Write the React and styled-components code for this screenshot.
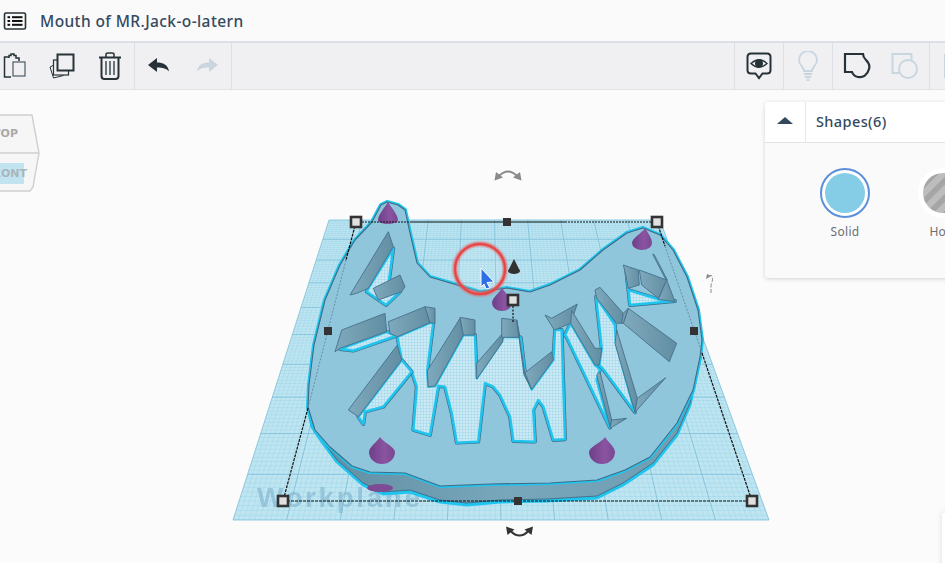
import React from "react";
import styled, { createGlobalStyle } from "styled-components";

const GlobalStyle = createGlobalStyle`
  html, body { margin: 0; padding: 0; background: #fbfbfb; }
  body { font-family: "Noto Sans", "Open Sans", sans-serif; }
`;

const DARK = "#263238";
const FADED = "#c9d6e0";

// zoomed crops were read at 3x, these turn crop coords into page coords
const crop = (ox, oy) => (pts) => pts.map(([x, y]) => [x / 3 + ox, y / 3 + oy]);
const a = crop(320, 280);
const b = crop(500, 280);
const c = crop(300, 160);
const d = crop(530, 200);
const str = (pts) => pts.map((p) => p.map((n) => n.toFixed(1)).join(",")).join(" ");

const TOP_TL = [329, 220];
const TOP_TR = [660, 220];
const BOT_L = [233, 520];
const BOT_R = [769, 520];

function gridLines(n) {
  const lines = [];
  for (let i = 0; i <= n; i++) {
    const u = i / n;
    lines.push([
      TOP_TL[0] + (TOP_TR[0] - TOP_TL[0]) * u,
      220,
      BOT_L[0] + (BOT_R[0] - BOT_L[0]) * u,
      520,
    ]);
    const w = 1 / (1 / 536 + u * (1 / 331 - 1 / 536));
    const y = 220 + (300 * (w - 331)) / (536 - 331);
    const t = (y - 220) / 300;
    lines.push([329 - 96 * t, y, 660 + 109 * t, y]);
  }
  return lines;
}
const fineGrid = gridLines(100);
const majorGrid = gridLines(10);

const topSurface = [
  [387, 202], [398, 205], [405, 210], [410, 233], [417, 263], [430, 277], [457, 285], [480, 292],
  [507, 288], [530, 292], [550, 285], [580, 270], [603, 250], [627, 233], [643, 228], [660, 235],
  [673, 250], [687, 277], [698, 310], [702, 340], [700, 357], [693, 390], [677, 423], [650, 457],
  [625, 470], [597, 480], [550, 483], [490, 484], [440, 486], [405, 473], [370, 472], [352, 466],
  [330, 447], [315, 430], [308, 407], [309, 385], [314, 345], [325, 300], [340, 265], [355, 240],
  [372, 222], [381, 205],
];

const sideWall = [
  [308, 407], [312, 425], [320, 437], [337, 460], [363, 483], [383, 492], [410, 490], [440, 500],
  [467, 503], [500, 500], [547, 499], [597, 496], [623, 483], [653, 463], [677, 433], [690, 403],
  [700, 357], [693, 390], [677, 423], [650, 457], [625, 470], [597, 480], [550, 483], [490, 484],
  [440, 486], [405, 473], [370, 472], [352, 466], [330, 447], [315, 430],
];

const floors = [
  [
    ...a([[232, 170], [330, 128], [340, 128], [322, 272], [325, 320], [345, 318], [430, 165], [465, 165], [470, 295], [545, 185], [550, 170]]),
    ...b([[62, 172], [75, 280], [95, 328], [160, 240], [165, 150], [185, 150], [195, 478], [160, 480], [130, 380], [115, 360], [100, 390], [105, 485], [40, 483], [30, 410], [0, 345]]),
    ...a([[520, 320], [495, 310], [475, 485], [410, 488], [395, 400], [375, 320], [355, 318], [330, 465], [280, 450], [290, 320], [275, 275], [245, 240]]),
  ],
  b([[195, 165], [212, 130], [285, 255], [300, 268], [290, 300], [330, 443], [200, 172]]),
  b([[288, 50], [345, 135], [348, 190], [405, 397], [310, 268], [298, 255], [305, 205]]),
  d([[288, 205], [295, 270], [385, 298], [435, 303], [300, 315]]),
  c([[205, 385], [280, 265], [262, 400], [300, 395], [258, 435], [200, 395]]),
  a([[60, 207], [200, 155], [228, 168], [100, 212]]),
  a([[245, 240], [275, 275], [190, 380], [135, 395], [130, 432], [115, 410]]),
];

const walls = [
  a([[205, 125], [315, 80], [330, 128], [232, 170], [210, 160]]),
  a([[315, 80], [345, 85], [345, 130], [330, 128]]),
  a([[322, 272], [420, 115], [430, 165], [345, 318], [325, 320]]),
  a([[420, 112], [465, 120], [465, 165], [430, 165]]),
  a([[470, 250], [548, 160], [548, 185], [470, 297]]),
  b([[5, 115], [50, 120], [60, 172], [5, 172]]),
  b([[50, 120], [75, 285], [95, 328], [72, 285]]),
  b([[75, 278], [155, 215], [160, 240], [95, 328]]),
  b([[135, 105], [155, 115], [232, 72], [212, 130], [163, 150]]),
  b([[215, 92], [285, 205], [305, 205], [298, 255], [285, 255], [212, 130]]),
  b([[285, 30], [300, 22], [370, 100], [365, 130], [350, 130], [290, 55]]),
  b([[385, 85], [530, 190], [508, 245], [370, 130]]),
  b([[370, 100], [385, 85], [370, 130], [365, 130]]),
  b([[350, 150], [412, 355], [405, 397], [345, 190]]),
  b([[412, 355], [497, 293], [405, 397]]),
  b([[290, 285], [300, 275], [335, 420], [330, 440]]),
  b([[335, 420], [380, 415], [330, 445]]),
  d([[280, 195], [325, 210], [328, 255], [295, 265], [285, 215]]),
  d([[328, 210], [410, 240], [385, 295], [335, 255]]),
  d([[368, 163], [372, 163], [412, 240], [408, 240]]),
  d([[410, 240], [435, 305], [385, 298]]),
  c([[150, 405], [265, 215], [280, 260], [205, 385], [170, 400]]),
  c([[220, 385], [300, 345], [315, 380], [305, 395], [235, 420]]),
  a([[45, 215], [65, 150], [195, 100], [200, 155], [60, 205]]),
  a([[232, 195], [245, 240], [115, 410], [85, 390]]),
];

const cones = [
  { x: 388, top: 202, base: 220, rx: 10, ry: 4 },
  { x: 502, top: 288, base: 303, rx: 10, ry: 8 },
  { x: 642, top: 228, base: 243, rx: 10, ry: 7, lean: 3 },
  { x: 382, top: 437, base: 452, rx: 13, ry: 12, lean: -2 },
  { x: 602, top: 437, base: 452, rx: 13, ry: 12, lean: 3 },
];

const corners = [[356, 222], [657, 222], [283, 501], [752, 501], [513, 300]];
const midpoints = [[507, 222], [328, 331], [694, 331], [518, 501]];

const Page = styled.div`
  width: 945px;
  height: 563px;
  display: flex;
  flex-direction: column;
  overflow: hidden;
  background: #fbfbfb;
`;

const TitleBar = styled.header`
  height: 41px;
  flex: none;
  display: flex;
  align-items: center;
  gap: 13px;
  padding-left: 3px;
  background: #fafafa;
`;

const Title = styled.h1`
  margin: 0;
  font-size: 15.5px;
  font-weight: 500;
  color: #34495e;
  letter-spacing: 0.4px;
`;

const Toolbar = styled.nav`
  height: 46px;
  flex: none;
  display: flex;
  justify-content: space-between;
  background: #f0f0f3;
  border-top: 2px solid #dcdfe6;
  border-bottom: 1px solid #e0e2e6;
`;

const ToolGroup = styled.div`
  display: flex;
  margin-left: ${(p) => p.$shift || 0}px;
  margin-right: ${(p) => p.$pull || 0}px;
`;

const ToolCell = styled.div`
  width: ${(p) => p.$w || 49}px;
  flex: none;
  display: flex;
  align-items: center;
  justify-content: center;
  box-sizing: border-box;
  border-left: ${(p) => (p.$left ? "1px solid #dcdfe4" : "none")};
  border-right: ${(p) => (p.$right ? "1px solid #dcdfe4" : "none")};
`;

const Canvas = styled.main`
  position: relative;
  flex: 1;
  overflow: hidden;
`;

const Scene = styled.svg`
  position: absolute;
  left: 0;
  top: 0;
  width: 945px;
  height: 473px;
`;

const Inspector = styled.aside`
  position: absolute;
  left: 765px;
  top: 12px;
  width: 200px;
  height: 176px;
  background: #fafafa;
  border-radius: 4px;
  box-shadow: 0 1px 4px rgba(0, 0, 0, 0.16);
`;

const InspectorHead = styled.div`
  height: 40px;
  display: flex;
  background: #fff;
  border-bottom: 1px solid #e1e3e8;
  border-radius: 4px 0 0 0;
`;

const Collapse = styled.div`
  width: 40px;
  flex: none;
  display: flex;
  align-items: center;
  justify-content: center;
  border-right: 1px solid #e6e8ec;
`;

const Caret = styled.span`
  width: 0;
  height: 0;
  margin-top: -3px;
  border-left: 8px solid transparent;
  border-right: 8px solid transparent;
  border-bottom: 7px solid #34495e;
`;

const HeadLabel = styled.div`
  padding-left: 10px;
  font-size: 14.5px;
  font-weight: 500;
  line-height: 38px;
  color: #34495e;
  letter-spacing: 0.4px;
`;

const Swatches = styled.div`
  display: flex;
  gap: 48px;
  padding: 25px 0 0 55px;
`;

const Swatch = styled.div`
  width: 50px;
  flex: none;
  display: flex;
  flex-direction: column;
  align-items: center;
  gap: 5px;
`;

const SwatchRing = styled.div`
  width: 50px;
  height: 50px;
  box-sizing: border-box;
  border-radius: 50%;
  border: ${(p) => (p.$active ? "2px solid #5b8fdc" : "5px solid #fff")};
  padding: ${(p) => (p.$active ? "3px" : "0")};
  background: #fff;
`;

const SwatchFill = styled.div`
  width: 100%;
  height: 100%;
  border-radius: 50%;
  background: ${(p) =>
    p.$hole
      ? "repeating-linear-gradient(135deg, #bdbdbd 0 6px, #a6a6a6 6px 12px)"
      : "#85cde6"};
`;

const SwatchLabel = styled.span`
  font-size: 12px;
  color: #6b7075;
  letter-spacing: 0.3px;
  white-space: nowrap;
`;

const CornerCard = styled.div`
  position: absolute;
  left: 942px;
  top: 423px;
  width: 40px;
  height: 60px;
  background: #fff;
  box-shadow: 0 0 6px rgba(0, 0, 0, 0.12);
`;

function ListIcon() {
  return (
    <svg width="24" height="20" viewBox="0 0 24 20">
      <rect x="1.5" y="2" width="21" height="16" rx="1.5" fill="none" stroke={DARK} strokeWidth="1.6" />
      <g fill="#111">
        <rect x="4.5" y="5.2" width="2.6" height="2" />
        <rect x="4.5" y="9" width="2.6" height="2" />
        <rect x="4.5" y="12.8" width="2.6" height="2" />
        <rect x="9" y="5.2" width="10.5" height="2" />
        <rect x="9" y="9" width="10.5" height="2" />
        <rect x="9" y="12.8" width="10.5" height="2" />
      </g>
    </svg>
  );
}

function PasteIcon() {
  return (
    <svg width="26" height="28" viewBox="0 0 26 28" fill="none" stroke={DARK}>
      <path d="M8 5H3.5v20H10" strokeWidth="1.5" />
      <path d="M8 6V3.5h2V2h3v1.5h2V6h3v3" strokeWidth="1.5" />
      <rect x="12" y="10" width="12" height="14" fill="#f0f0f3" strokeWidth="1.2" stroke="#4a5a63" />
    </svg>
  );
}

function CopyIcon() {
  return (
    <svg width="28" height="28" viewBox="0 0 28 28" fill="none" stroke={DARK}>
      <path d="M5 13.5L2 15l3.5 11 10-2.5" strokeWidth="1" />
      <rect x="6.5" y="6" width="15" height="15" fill="#f0f0f3" strokeWidth="1.2" transform="translate(-1 2)" />
      <rect x="9.5" y="2.5" width="16" height="16" fill="#f0f0f3" strokeWidth="2" />
    </svg>
  );
}

function TrashIcon() {
  return (
    <svg width="24" height="30" viewBox="0 0 24 30" fill="none" stroke={DARK}>
      <path d="M1 6.5h22" strokeWidth="2" />
      <path d="M8 6V3.5Q8 2 10 2h4q2 0 2 1.500V6" strokeWidth="1.5" />
      <path d="M3.500 7v18q0 3 3 3h11q3 0 3-3V7" strokeWidth="2" />
      <path d="M8 10v14M12 10v14M16 10v14" strokeWidth="1.3" />
    </svg>
  );
}

function ArrowIcon({ flip, color }) {
  return (
    <svg width="22" height="16" viewBox="0 0 22 16" style={{ transform: flip ? "scaleX(-1)" : "none" }}>
      <path d="M0 7L9 0v4.500c6 0 11 2 12 9-2.500-3-6-4-12-4V14z" fill={color} />
    </svg>
  );
}

function EyeBubbleIcon() {
  return (
    <svg width="26" height="28" viewBox="0 0 26 28" fill="none" stroke={DARK} strokeWidth="2">
      <path d="M5 1.500h16q3.500 0 3.500 3.500v13q0 3.500-3.500 3.500h-4.500L13 26l-3.500-4.500H5q-3.500 0-3.500-3.500V5Q1.500 1.500 5 1.500z" />
      <path d="M5 11.500q8-7.500 16 0-8 7.500-16 0z" strokeWidth="1.400" />
      <circle cx="13" cy="11.500" r="4" fill={DARK} stroke="none" />
    </svg>
  );
}

function BulbIcon() {
  return (
    <svg width="22" height="30" viewBox="0 0 22 30" fill="none" stroke={FADED} strokeWidth="1.800">
      <path d="M7 20c0-4-5-5.500-5-11a9 9 0 0 1 18 0c0 5.500-5 7-5 11z" />
      <path d="M7 23h8M8 26h6M9.500 29h3" />
    </svg>
  );
}

function NotchIcon() {
  return (
    <svg width="28" height="28" viewBox="0 0 28 28" fill="none" stroke={DARK} strokeWidth="2.200">
      <path d="M2 2h18c0 3 1 4 3 6 3 3 4 6 3 9-1.500 6-6 9-11 8-3-.6-5-2-6-5H2z" />
    </svg>
  );
}

function CombineIcon() {
  return (
    <svg width="28" height="28" viewBox="0 0 28 28" fill="none" stroke={FADED} strokeWidth="2">
      <rect x="1.500" y="2" width="19" height="19" />
      <circle cx="17" cy="17" r="9" fill="#f0f0f3" />
    </svg>
  );
}

function ViewCube() {
  const label = { textAnchor: "end", fontFamily: "DejaVu Sans, sans-serif", fontWeight: 700, fontSize: 11 };
  return (
    <g>
      <path d="M-20 115H32L39 153L33 187L30 191H-20Z" fill="#f6f6f6" stroke="#cfcfcf" strokeWidth="1.400" />
      <path d="M-20 153H39" stroke="#cfcfcf" strokeWidth="1.400" />
      <rect x="-20" y="163" width="44" height="21" fill="#c2e4f1" />
      <text x="18" y="137" {...label} fill="#a9a9a9">TOP</text>
      <text x="27" y="177" {...label} fill="#a9b6ba">FRONT</text>
    </g>
  );
}

function Workplane() {
  const shape = `${TOP_TL} ${TOP_TR} ${BOT_R} ${BOT_L}`;
  return (
    <g>
      <polygon points={shape} fill="#bfe5f1" />
      <g stroke="#7fc6e0" strokeWidth="0.5" opacity="0.5">
        {fineGrid.map((l, i) => (
          <line key={i} x1={l[0]} y1={l[1]} x2={l[2]} y2={l[3]} />
        ))}
      </g>
      <g stroke="#6fb6d4" strokeWidth="0.8" opacity="0.75">
        {majorGrid.map((l, i) => (
          <line key={i} x1={l[0]} y1={l[1]} x2={l[2]} y2={l[3]} />
        ))}
      </g>
      <text x="257" y="507" fontFamily="Liberation Sans, sans-serif" fontWeight="700" fontSize="28" textLength="163" fill="#7fb2cc" opacity="0.6">
        Workplane
      </text>
    </g>
  );
}

function Jaw() {
  return (
    <g strokeLinejoin="round">
      <polygon points={str(sideWall)} fill="#1fc5ee" stroke="#1fc5ee" strokeWidth="3" transform="translate(0 2)" />
      <polygon points={str(sideWall)} fill="url(#sideShade)" stroke="#46708a" strokeWidth="1" />
      <ellipse cx="380" cy="488" rx="13" ry="4" fill="#7d4a94" />
      <polygon points={str(topSurface)} fill="#8fc6dc" stroke="#1fc5ee" strokeWidth="4" />
      <polygon points={str(topSurface)} fill="#8fc6dc" stroke="#3f6a85" strokeWidth="1.100" />
      {floors.map((f, i) => (
        <g key={i}>
          <polygon points={str(f)} fill="none" stroke="#3f6a85" strokeWidth="3.800" />
          <polygon points={str(f)} fill="url(#floorDots)" stroke="#1fc5ee" strokeWidth="2.600" />
        </g>
      ))}
      {walls.map((w, i) => (
        <polygon key={i} points={str(w)} fill="url(#wallShade)" stroke="#46708a" strokeWidth="0.900" />
      ))}
    </g>
  );
}

// teardrop outline, the cones are seen from above so their sides bulge
function Cone({ x, top, base, rx, ry, lean = 0 }) {
  const tip = x + lean;
  return (
    <path
      d={`M${tip} ${top}C${tip + 3} ${top + 5} ${x + rx} ${base - 5} ${x + rx} ${base}A${rx} ${ry} 0 1 1 ${x - rx} ${base}C${x - rx} ${base - 5} ${tip - 3} ${top + 5} ${tip} ${top}Z`}
      fill="url(#coneShade)"
    />
  );
}

function Frame() {
  return (
    <g fill="none" stroke="#111" strokeWidth="1.200">
      <path d="M356 222H410M565 222H657" strokeDasharray="2 1" />
      <path d="M410 222H565" />
      <path d="M657 222L665 246M702 353L752 501" strokeDasharray="3 1" />
      <path d="M283 501H752" strokeDasharray="3 1" />
      <path d="M356 222L346 260M308 408L283 501" strokeDasharray="3 1" />
      <path d="M346 260L308 408M665 246L702 353" stroke="#5f7f90" strokeWidth="0.800" strokeDasharray="2 1.500" />
      <path d="M513 306V322" strokeDasharray="2 1.500" />
    </g>
  );
}

function Handles() {
  return (
    <g>
      {corners.map(([x, y]) => (
        <rect key={`${x}-${y}`} x={x - 5} y={y - 5} width="10" height="10" fill="#e0e0e0" stroke="#333" strokeWidth="2.600" />
      ))}
      {midpoints.map(([x, y]) => (
        <rect key={`${x}-${y}`} x={x - 4} y={y - 4} width="8" height="8" fill="#333" />
      ))}
    </g>
  );
}

function RotateArrow({ x, y, color, flip = false }) {
  return (
    <g transform={`translate(${x} ${y}) scale(1 ${flip ? -1 : 1})`} fill="none" stroke={color} strokeWidth="2">
      <path d="M-9 1Q0 -8 9 1" />
      <path d="M-13.500 5.500L-12 -3L-5 2.500Z M13.500 5.500L12 -3L5 2.500Z" fill={color} stroke="none" />
    </g>
  );
}

export default function App() {
  return (
    <Page>
      <GlobalStyle />
      <TitleBar>
        <ListIcon />
        <Title>Mouth of MR.Jack-o-latern</Title>
      </TitleBar>
      <Toolbar>
        <ToolGroup $shift={-10}>
          <ToolCell $w={48}><PasteIcon /></ToolCell>
          <ToolCell $w={48}><CopyIcon /></ToolCell>
          <ToolCell $w={49} $right><TrashIcon /></ToolCell>
          <ToolCell $w={48}><ArrowIcon color={DARK} /></ToolCell>
          <ToolCell $w={49} $right><ArrowIcon flip color={FADED} /></ToolCell>
        </ToolGroup>
        <ToolGroup $pull={-33}>
          <ToolCell $left><EyeBubbleIcon /></ToolCell>
          <ToolCell $left><BulbIcon /></ToolCell>
          <ToolCell $left><NotchIcon /></ToolCell>
          <ToolCell $w={48}><CombineIcon /></ToolCell>
          <ToolCell $left><svg width="24" height="28"><rect x="2" y="2" width="10" height="24" fill={FADED} /></svg></ToolCell>
        </ToolGroup>
      </Toolbar>
      <Canvas>
        <Scene viewBox="0 90 945 473">
          <defs>
            <pattern id="floorDots" width="3" height="3" patternUnits="userSpaceOnUse">
              <rect width="3" height="3" fill="#cdeaf4" />
              <path d="M0 .5H3M.5 0V3" stroke="#a3d7ea" strokeWidth="0.600" />
            </pattern>
            <linearGradient id="sideShade" x1="0" x2="1" y1="0" y2="0">
              <stop offset="0" stopColor="#5f8ca1" />
              <stop offset="0.5" stopColor="#78a6ba" />
              <stop offset="1" stopColor="#6f9cb0" />
            </linearGradient>
            <linearGradient id="wallShade" x1="0" x2="1" y1="0" y2="0">
              <stop offset="0" stopColor="#7fa9bc" />
              <stop offset="1" stopColor="#628ea3" />
            </linearGradient>
            <linearGradient id="coneShade" x1="0" x2="1" y1="0" y2="0">
              <stop offset="0" stopColor="#6f3f88" />
              <stop offset="0.6" stopColor="#8a54a0" />
              <stop offset="1" stopColor="#7a4792" />
            </linearGradient>
            <filter id="soft" x="-20%" y="-20%" width="140%" height="140%">
              <feGaussianBlur stdDeviation="1.200" />
            </filter>
          </defs>
          <ViewCube />
          <Workplane />
          <Jaw />
          {cones.map((cone) => (
            <Cone key={`${cone.x}-${cone.top}`} {...cone} />
          ))}
          <path d="M514 259L520 271H508Z" fill="#333" />
          <ellipse cx="514" cy="271" rx="6" ry="3" fill="#333" />
          <Frame />
          <Handles />
          <circle cx="480" cy="269" r="25" fill="rgba(255,255,255,0.08)" stroke="#ea5a5a" strokeWidth="4" filter="url(#soft)" />
          <circle cx="480" cy="269" r="25" fill="none" stroke="#e64646" strokeWidth="2" />
          <path d="M481 268L494 282L487 282.500L490 288L486 289L484 284L481 287Z" fill="#2f6fe6" stroke="#fff" strokeWidth="1" />
          <RotateArrow x={508} y={175} color="#8a8a8a" />
          <RotateArrow x={519.500} y={532} color="#333" flip />
          <path d="M711 293V285Q714 278 711 275L708 277" fill="none" stroke="#888" strokeWidth="1" strokeDasharray="4 1.500" />
          <path d="M706 279L707 274L711 276Z" fill="#888" />
        </Scene>
        <Inspector>
          <InspectorHead>
            <Collapse><Caret /></Collapse>
            <HeadLabel>Shapes(6)</HeadLabel>
          </InspectorHead>
          <Swatches>
            <Swatch>
              <SwatchRing $active><SwatchFill /></SwatchRing>
              <SwatchLabel>Solid</SwatchLabel>
            </Swatch>
            <Swatch>
              <SwatchRing><SwatchFill $hole /></SwatchRing>
              <SwatchLabel>Hole</SwatchLabel>
            </Swatch>
          </Swatches>
        </Inspector>
        <CornerCard />
      </Canvas>
    </Page>
  );
}
